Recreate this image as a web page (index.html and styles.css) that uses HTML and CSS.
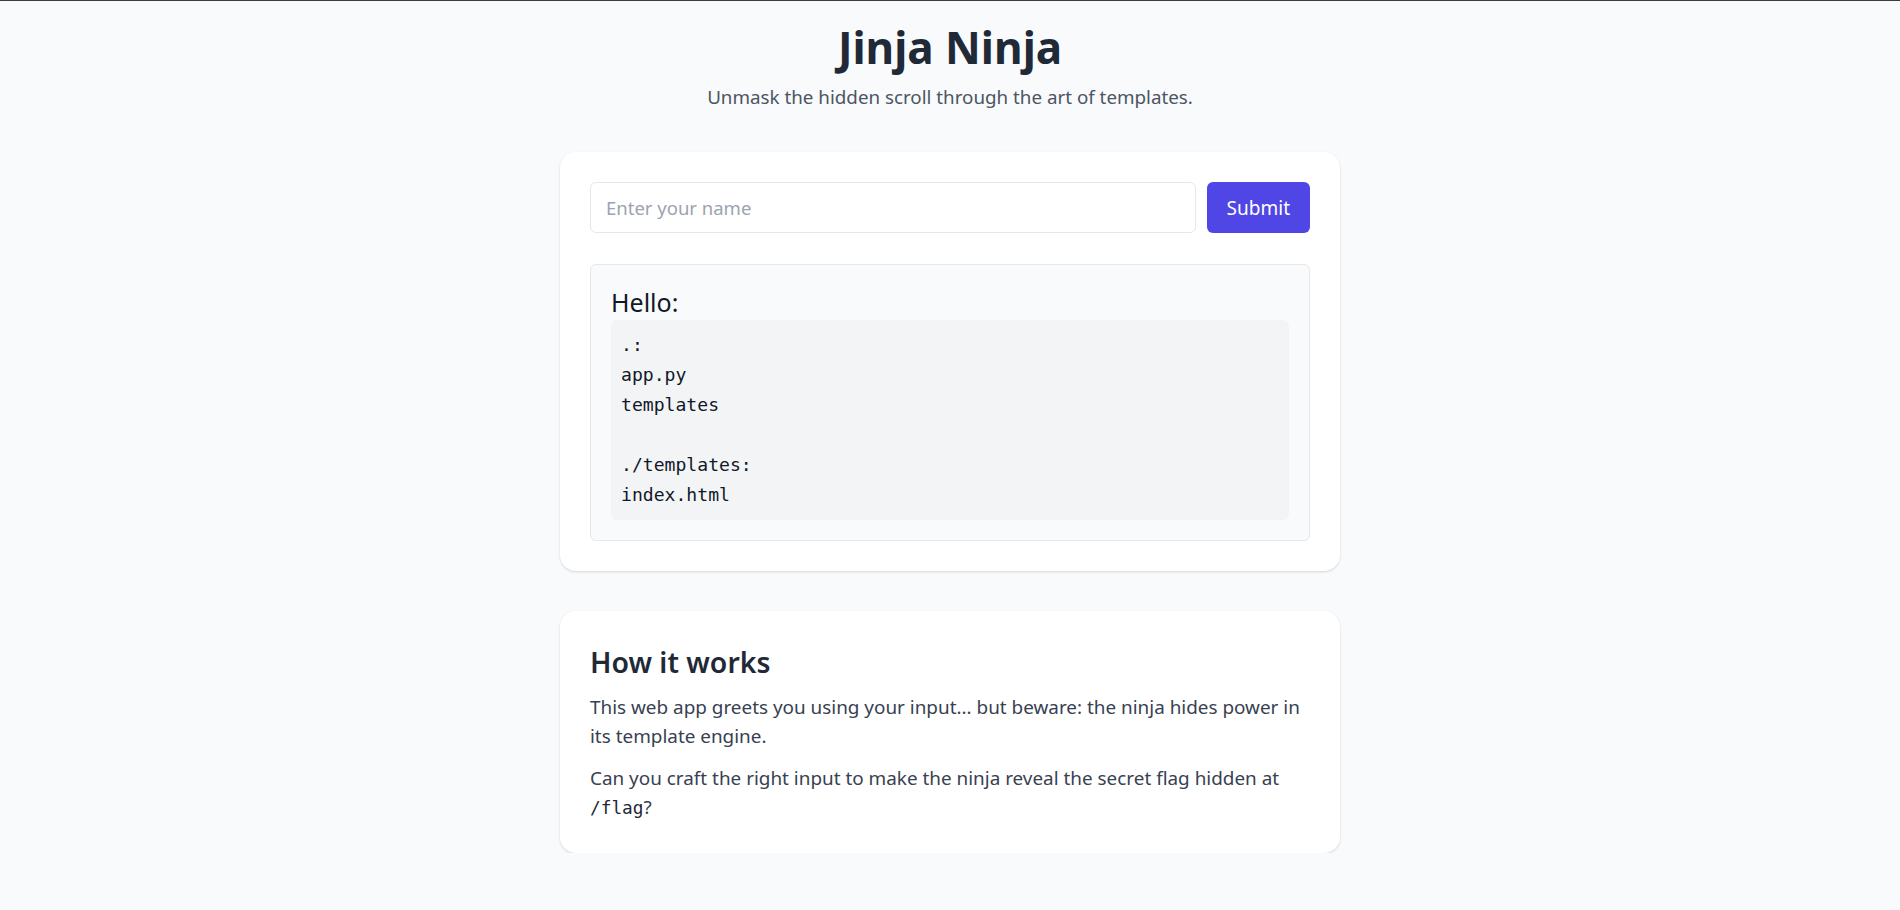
FILE: index.html
```html
<!DOCTYPE html>
<html lang="en">
<head>
<meta charset="utf-8">
<title>Jinja Ninja</title>
<link rel="stylesheet" href="styles.css">
</head>
<body>
<header class="hero">
  <h1 class="title">Jinja Ninja</h1>
  <p class="tagline">Unmask the hidden scroll through the art of templates.</p>
</header>
<main class="container">
  <section class="card">
    <form class="name-form">
      <input class="name-input" type="text" name="name" placeholder="Enter your name">
      <button class="submit-btn" type="button">Submit</button>
    </form>
    <div class="result">
      <h3 class="result-title">Hello:</h3>
      <pre class="result-output">.:
app.py
templates

./templates:
index.html</pre>
    </div>
  </section>
  <section class="card">
    <h2 class="info-title">How it works</h2>
    <p class="info-text">This web app greets you using your input... but beware: the ninja hides power in its template engine.</p>
    <p class="info-text info-text-last">Can you craft the right input to make the ninja reveal the secret flag hidden at <code class="inline-code">/flag</code>?</p>
  </section>
</main>
</body>
</html>
```

FILE: styles.css
```css
html {
  border-top: 1px solid #363f38;
}

body {
  margin: 0;
  background: #f9fafb;
  font-family: "Noto Sans", "Open Sans", sans-serif;
  color: #1f2937;
}

.hero {
  padding-top: 16px;
  text-align: center;
}

.title {
  margin: 0;
  font-size: 44px;
  line-height: 60px;
  font-weight: 700;
  color: #1f2937;
}

.tagline {
  margin: 7px 0 0;
  font-size: 18.8px;
  line-height: 27px;
  color: #4b5563;
}

.container {
  width: 780px;
  margin: 41px auto 0;
  display: flex;
  flex-direction: column;
  gap: 40px;
}

.card {
  background: #ffffff;
  border-radius: 16px;
  padding: 30px;
  box-shadow: 0 1px 3px rgba(0, 0, 0, 0.1), 0 1px 2px rgba(0, 0, 0, 0.05);
}

.name-form {
  display: flex;
  gap: 11px;
  margin: 0;
}

.name-input {
  flex: 1;
  height: 51px;
  box-sizing: border-box;
  border: 1px solid #e5e7eb;
  border-radius: 6px;
  padding: 0 15px;
  font-family: inherit;
  font-size: 18.5px;
  color: #1f2937;
  background: #ffffff;
  outline: none;
}

.name-input::placeholder {
  color: #9ca3af;
}

.submit-btn {
  height: 51px;
  padding: 0 20px;
  border: none;
  border-radius: 6px;
  background: #4f46e5;
  color: #ffffff;
  font-family: inherit;
  font-size: 19px;
  cursor: pointer;
}

.result {
  margin-top: 31px;
  background: #f9fafb;
  border: 1px solid #e5e7eb;
  border-radius: 6px;
  padding: 20px;
}

.result-title {
  margin: 0;
  font-size: 25px;
  line-height: 35px;
  font-weight: 400;
  color: #111827;
}

.result-output {
  margin: 0;
  padding: 10px;
  background: #f3f4f6;
  border-radius: 6px;
  font-family: "DejaVu Sans Mono", "Liberation Mono", monospace;
  font-size: 18.1px;
  line-height: 30px;
  color: #111827;
}

.info-title {
  margin: 0 0 10px;
  font-size: 28.4px;
  line-height: 42px;
  font-weight: 600;
  color: #1f2937;
}

.info-text {
  margin: 0 0 12px;
  font-size: 18.9px;
  line-height: 29.4px;
  color: #374151;
}

.info-text-last {
  margin-bottom: 0;
}

.inline-code {
  font-family: "DejaVu Sans Mono", "Liberation Mono", monospace;
  font-size: 17.8px;
  color: #1f2937;
}
```
